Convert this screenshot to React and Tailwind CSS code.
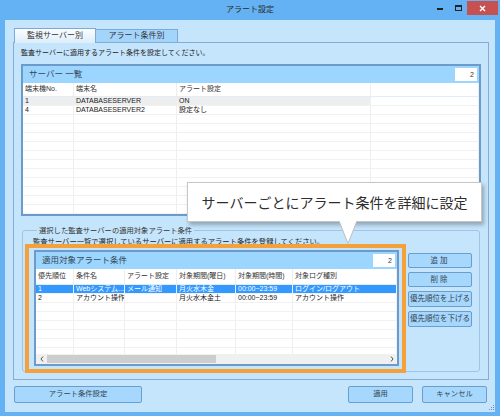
import React from 'react';

const SERVER_COLS = ['w-[51px]', 'w-[103px]', 'w-[194px]', 'flex-1'];
const SERVER_HEAD = ['端末機No.', '端末名', 'アラート設定', ''];
const SERVERS = [
  { cells: ['1', 'DATABASESERVER', 'ON', ''], selected: true },
  { cells: ['4', 'DATABASESERVER2', '設定なし', ''] },
];

const RULE_COLS = ['w-[38px]', 'w-[51px]', 'w-[52px]', 'w-[59px]', 'w-[57px]', 'flex-1'];
const RULE_HEAD = ['優先順位', '条件名', 'アラート設定', '対象期間(曜日)', '対象期間(時間)', '対象ログ種別'];
const RULES = [
  { cells: ['1', 'Webシステム...', 'メール通知', '月火水木金', '00:00~23:59', 'ログイン/ログアウト'], selected: true },
  { cells: ['2', 'アカウント操作', '', '月火水木金土', '00:00~23:59', 'アカウント操作'] },
];

// ── Window chrome ────────────────────────────────────────────────────────────
function TitleBar() {
  return (
    <div className="h-[20px] flex items-start shrink-0">
      <div className="w-[80px]" />
      <div className="flex-1 text-center text-[8px] leading-[20px] text-[#2a2a2a]">アラート設定</div>
      <div className="w-[80px] flex justify-end items-start pr-[2px] pt-[1px]">
        <div className="w-[6px] h-[2px] bg-[#222] mt-[7px] mr-[12px]" />
        <div className="w-[7px] h-[6px] border border-t-2 border-[#222] mt-[4px] mr-[5px]" />
        <div className="w-[31px] h-[14px] bg-[#c75050] flex items-center justify-center">
          <svg width="7" height="7" viewBox="0 0 7 7">
            <path d="M1 1 L6 6 M6 1 L1 6" stroke="#fff" strokeWidth="1.4" />
          </svg>
        </div>
      </div>
    </div>
  );
}

// ── Grid table pieces ─────────────────────────────────────────────────────────
function HeaderRow({ cols, labels, h }) {
  return (
    <div className={`flex shrink-0 border-b border-[#e2ecf6] ${h}`}>
      {cols.map((c, i) => (
        <div key={i} className={`${c} border-r border-[#eeeeee] px-[2px] flex items-center text-[7px] text-[#333] whitespace-nowrap overflow-hidden`}>
          {labels[i]}
        </div>
      ))}
    </div>
  );
}

function DataRow({ cols, cells = [], selected, blue }) {
  return (
    <div className="flex h-[9px] shrink-0 border-b border-[#f1f1f1]">
      {cols.map((c, i) => {
        let bg = '';
        if (selected && blue) bg = 'bg-[#3399ff] text-white';
        else if (selected && i < cols.length - 1) bg = 'bg-[#eeeeee] text-[#222]';
        else bg = 'text-[#222]';
        return (
          <div key={i} className={`${c} ${bg} border-r border-[#efefef] px-[2px] text-[7px] leading-[8px] whitespace-nowrap overflow-hidden`}>
            {cells[i] || ''}
          </div>
        );
      })}
    </div>
  );
}

function PanelBand({ title }) {
  return (
    <div className="h-[17px] shrink-0 bg-[#9cd6fe] flex items-center justify-between pl-[6px] pr-[2px]">
      <span className="text-[8.5px] text-[#34465a]">{title}</span>
      <span className="w-[22px] h-[13px] bg-white text-right pr-[3px] text-[7px] leading-[13px] text-[#333]">2</span>
    </div>
  );
}

function Btn({ children, className = '' }) {
  return (
    <div className={`border border-[#6b9dcf] bg-[#a6d7fd] rounded-[2px] flex items-center justify-center text-[#34414f] whitespace-nowrap ${className}`}>
      {children}
    </div>
  );
}

// ── Main ──────────────────────────────────────────────────────────────────────
export default function App() {
  return (
    <div className="relative w-[500px] h-[416px] bg-[#64b1f3] flex flex-col overflow-hidden font-['Liberation_Sans','Noto_Sans_CJK_JP',sans-serif]">
      <TitleBar />

      <div className="flex-1 mx-[5px] mb-[4px] bg-[#c5e5fc] pl-[8px] pr-[6px] pt-[8px] flex flex-col">
        {/* Tabs */}
        <div className="flex items-end h-[14px] ml-[1px] relative z-10 shrink-0">
          <div className="w-[82px] h-[15px] -mb-[1px] border border-b-0 border-[#7ea9d5] bg-linear-to-b from-[#fbfdff] to-[#dcedfb] flex items-center justify-center text-[8px] text-[#333]">
            監視サーバー別
          </div>
          <div className="w-[82px] h-[13px] border border-l-0 border-b-0 border-[#7ea9d5] bg-[#a3d5fc] flex items-center justify-center text-[8px] text-[#333]">
            アラート条件別
          </div>
        </div>

        {/* Tab panel */}
        <div className="h-[338px] shrink-0 border border-[#86acd4] px-[7px] flex flex-col">
          <div className="pt-[5px] text-[7px] leading-[10px] text-[#222]">
            監査サーバーに適用するアラート条件を設定してください。
          </div>

          {/* Server list */}
          <div className="mt-[6px] h-[152px] shrink-0 border-2 border-[#6b9acb] bg-white flex flex-col overflow-hidden">
            <PanelBand title="サーバー 一覧" />
            <HeaderRow cols={SERVER_COLS} labels={SERVER_HEAD} h="h-[14px]" />
            {Array.from({ length: 14 }).map((_, i) => (
              <DataRow key={i} cols={SERVER_COLS} cells={SERVERS[i]?.cells} selected={SERVERS[i]?.selected} />
            ))}
          </div>

          {/* Group box */}
          <fieldset className="mt-[10px] mx-[1px] border border-[#a3c3e0] rounded-[3px] pl-[10px] pb-[5px]">
            <legend className="ml-[4px] px-[2px] text-[7.3px] leading-[9px] text-[#333]">
              選択した監査サーバーの適用対象アラート条件
            </legend>
            <div className="pt-[2px] text-[7.3px] leading-[9px] text-[#222] whitespace-nowrap">
              監査サーバー一覧で選択しているサーバーに適用するアラート条件を登録してください。
            </div>

            <div className="mt-[4px] ml-[1px] flex items-start">
              <div className="relative">
                <div className="w-[365px] h-[116px] border-2 border-[#6b9acb] bg-white flex flex-col overflow-hidden">
                  <PanelBand title="適用対象アラート条件" />
                  <HeaderRow cols={RULE_COLS} labels={RULE_HEAD} h="h-[16px]" />
                  <div className="flex-1 overflow-hidden flex flex-col">
                    {Array.from({ length: 8 }).map((_, i) => (
                      <DataRow key={i} cols={RULE_COLS} cells={RULES[i]?.cells} selected={RULES[i]?.selected} blue />
                    ))}
                  </div>
                  {/* horizontal scrollbar */}
                  <div className="h-[10px] shrink-0 bg-[#f0f0f0] flex items-center">
                    <div className="w-[11px] flex justify-center">
                      <svg width="4" height="6" viewBox="0 0 4 6"><path d="M3 0.5 L1 3 L3 5.5" stroke="#555" strokeWidth="1" fill="none" /></svg>
                    </div>
                    <div className="w-[169px] h-[8px] bg-[#cdcdcd]" />
                    <div className="flex-1" />
                    <div className="w-[11px] flex justify-center">
                      <svg width="4" height="6" viewBox="0 0 4 6"><path d="M1 0.5 L3 3 L1 5.5" stroke="#555" strokeWidth="1" fill="none" /></svg>
                    </div>
                  </div>
                </div>
                {/* orange highlight */}
                <div className="absolute -left-[9px] -top-[6px] -right-[7px] -bottom-[7px] border-4 border-[#f5a13b] pointer-events-none" />
              </div>

              <div className="ml-[9px] mt-[3px] flex flex-col gap-[4px]">
                <Btn className="w-[64px] h-[15px] text-[7.5px] tracking-[2px]">追加</Btn>
                <Btn className="w-[64px] h-[15px] text-[7.5px] tracking-[2px]">削除</Btn>
                <Btn className="w-[64px] h-[16px] text-[7.5px]">優先順位を上げる</Btn>
                <Btn className="w-[64px] h-[16px] text-[7.5px]">優先順位を下げる</Btn>
              </div>
            </div>
          </fieldset>
        </div>

        {/* Bottom buttons */}
        <div className="mt-[6px] flex items-center">
          <Btn className="ml-[1px] w-[128px] h-[17px] text-[7.3px]">アラート条件設定</Btn>
          <div className="flex-1" />
          <Btn className="w-[65px] h-[17px] text-[7.3px]">適用</Btn>
          <Btn className="ml-[9px] mr-[2px] w-[65px] h-[17px] text-[7.3px]">キャンセル</Btn>
        </div>
      </div>

      {/* resize grip */}
      <svg className="absolute left-[489px] top-[405px]" width="6" height="6" viewBox="0 0 6 6">
        <rect x="4" y="0" width="1" height="1" fill="#6a8fb3" />
        <rect x="2" y="2" width="1" height="1" fill="#6a8fb3" />
        <rect x="4" y="2" width="1" height="1" fill="#6a8fb3" />
        <rect x="0" y="4" width="1" height="1" fill="#6a8fb3" />
        <rect x="2" y="4" width="1" height="1" fill="#6a8fb3" />
        <rect x="4" y="4" width="1" height="1" fill="#6a8fb3" />
      </svg>

      {/* callout */}
      <div className="absolute left-[187px] top-[182px] w-[295px] h-[40px] bg-white border border-[#c6c6c6] shadow-[2px_3px_4px_rgba(0,0,0,0.28)] flex items-center justify-center text-[14px] text-[#2e2e2e] font-['Noto_Sans_CJK_JP',sans-serif]">
        サーバーごとにアラート条件を詳細に設定
      </div>
      <svg className="absolute left-[336px] top-[220px]" width="24" height="25" viewBox="0 0 24 25">
        <polygon points="3,0 21,0 12,23.5" fill="#fff" />
        <path d="M3 1 L12 23.5 L21 1" stroke="#c0c0c0" strokeWidth="1" fill="none" />
      </svg>
    </div>
  );
}
